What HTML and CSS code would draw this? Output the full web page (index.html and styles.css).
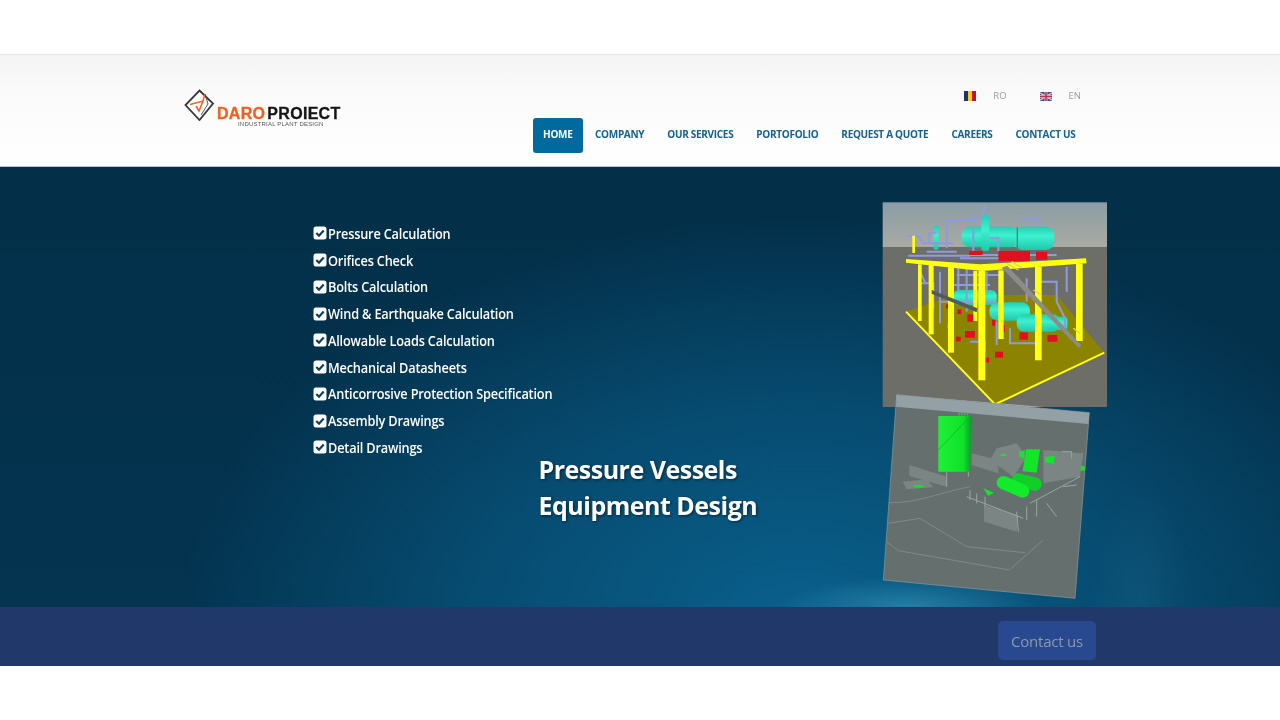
FILE: index.html
```html
<!DOCTYPE html>
<html lang="en">
<head>
<meta charset="utf-8">
<title>Daro Proiect</title>
<link rel="stylesheet" href="styles.css">
</head>
<body>
<div class="page">
  <header class="header">
    <div class="logo">
      <svg class="logo-mark" viewBox="0 0 32 32" aria-hidden="true">
        <path d="M15.5 1.500 29 14.500 15.500 31 1.500 16Z" fill="#fff" stroke="#33363a" stroke-width="1.800"/>
        <path d="M6 15.500 19 12 15 22 12 17M19 12 21 5" fill="none" stroke="#f0601e" stroke-width="1.500"/>
        <path d="M21 5 24 15 17 26" fill="none" stroke="#555" stroke-width="1"/>
      </svg>
      <div class="logo-text">
        <div class="logo-name"><span class="logo-orange">DARO</span><span class="logo-black">PROIECT</span></div>
        <div class="logo-sub">INDUSTRIAL PLANT DESIGN</div>
      </div>
    </div>
    <div class="header-right">
      <div class="langs">
        <span class="lang">
          <svg class="flag" viewBox="0 0 12 10" aria-hidden="true"><rect width="4" height="10" fill="#1c2f78"/><rect x="4" width="4" height="10" fill="#f5cf14"/><rect x="8" width="4" height="10" fill="#c8102e"/></svg>
          RO
        </span>
        <span class="lang">
          <svg class="flag" viewBox="0 0 12 10" aria-hidden="true"><rect width="12" height="10" y="1" fill="#3d4a86"/><path d="M0 2 12 9M12 2 0 9" stroke="#d8c8d0" stroke-width="1.500"/><path d="M6 1V10M0 5.500H12" stroke="#d8c8d0" stroke-width="3"/><path d="M6 1V10M0 5.500H12" stroke="#b8304a" stroke-width="1.500"/></svg>
          EN
        </span>
      </div>
      <nav class="nav">
        <a class="nav-item active">HOME</a>
        <a class="nav-item">COMPANY</a>
        <a class="nav-item">OUR SERVICES</a>
        <a class="nav-item">PORTOFOLIO</a>
        <a class="nav-item">REQUEST A QUOTE</a>
        <a class="nav-item">CAREERS</a>
        <a class="nav-item">CONTACT US</a>
      </nav>
    </div>
  </header>

  <section class="hero">
    <ul class="checks">
      <li class="check"><svg class="tick" viewBox="0 0 14 14"><rect width="13" height="13" x=".5" y=".5" rx="2.500" fill="#fff"/><path d="M3.300 7 6 9.700 10.700 4.500" fill="none" stroke="#0d3f5c" stroke-width="2.200"/></svg><span class="label">Pressure Calculation</span></li>
      <li class="check"><svg class="tick" viewBox="0 0 14 14"><rect width="13" height="13" x=".5" y=".5" rx="2.500" fill="#fff"/><path d="M3.300 7 6 9.700 10.700 4.500" fill="none" stroke="#0d3f5c" stroke-width="2.200"/></svg><span class="label">Orifices Check</span></li>
      <li class="check"><svg class="tick" viewBox="0 0 14 14"><rect width="13" height="13" x=".5" y=".5" rx="2.500" fill="#fff"/><path d="M3.300 7 6 9.700 10.700 4.500" fill="none" stroke="#0d3f5c" stroke-width="2.200"/></svg><span class="label">Bolts Calculation</span></li>
      <li class="check"><svg class="tick" viewBox="0 0 14 14"><rect width="13" height="13" x=".5" y=".5" rx="2.500" fill="#fff"/><path d="M3.300 7 6 9.700 10.700 4.500" fill="none" stroke="#0d3f5c" stroke-width="2.200"/></svg><span class="label">Wind &amp; Earthquake Calculation</span></li>
      <li class="check"><svg class="tick" viewBox="0 0 14 14"><rect width="13" height="13" x=".5" y=".5" rx="2.500" fill="#fff"/><path d="M3.300 7 6 9.700 10.700 4.500" fill="none" stroke="#0d3f5c" stroke-width="2.200"/></svg><span class="label">Allowable Loads Calculation</span></li>
      <li class="check"><svg class="tick" viewBox="0 0 14 14"><rect width="13" height="13" x=".5" y=".5" rx="2.500" fill="#fff"/><path d="M3.300 7 6 9.700 10.700 4.500" fill="none" stroke="#0d3f5c" stroke-width="2.200"/></svg><span class="label">Mechanical Datasheets</span></li>
      <li class="check"><svg class="tick" viewBox="0 0 14 14"><rect width="13" height="13" x=".5" y=".5" rx="2.500" fill="#fff"/><path d="M3.300 7 6 9.700 10.700 4.500" fill="none" stroke="#0d3f5c" stroke-width="2.200"/></svg><span class="label">Anticorrosive Protection Specification</span></li>
      <li class="check"><svg class="tick" viewBox="0 0 14 14"><rect width="13" height="13" x=".5" y=".5" rx="2.500" fill="#fff"/><path d="M3.300 7 6 9.700 10.700 4.500" fill="none" stroke="#0d3f5c" stroke-width="2.200"/></svg><span class="label">Assembly Drawings</span></li>
      <li class="check"><svg class="tick" viewBox="0 0 14 14"><rect width="13" height="13" x=".5" y=".5" rx="2.500" fill="#fff"/><path d="M3.300 7 6 9.700 10.700 4.500" fill="none" stroke="#0d3f5c" stroke-width="2.200"/></svg><span class="label">Detail Drawings</span></li>
    </ul>
    <h1 class="title">Pressure Vessels<br>Equipment Design</h1>

    <svg class="render render-plant" viewBox="0 0 750 645" aria-hidden="true">
      <defs>
        <linearGradient id="sky" x1="0" y1="0" x2="0" y2="1"><stop offset="0" stop-color="#8b9da6"/><stop offset="1" stop-color="#a9aaa3"/></linearGradient>
        <linearGradient id="vessel" x1="0" y1="0" x2="0" y2="1"><stop offset="0" stop-color="#1fd0b4"/><stop offset=".4" stop-color="#3ff0d0"/><stop offset="1" stop-color="#20c8a8"/></linearGradient>
      </defs>
      <rect x="38" y="22" width="673" height="134" fill="url(#sky)"/>
      <rect x="38" y="156" width="673" height="480" fill="#6e6e68"/>
      <path d="M108 350 250 300 560 300 703 473 375 628Z" fill="#8c8400"/>
      <path d="M108 350 375 628 703 473" fill="none" stroke="#ffff14" stroke-width="6"/>
      <g fill="url(#vessel)">
        <rect x="275" y="95" width="170" height="62" rx="24"/>
        <rect x="433" y="95" width="120" height="70" rx="26"/>
        <rect x="334" y="60" width="24" height="108" rx="8"/>
        <rect x="190" y="92" width="16" height="72" rx="6"/>
        <rect x="250" y="285" width="130" height="45" rx="16"/>
        <rect x="358" y="322" width="122" height="55" rx="24"/>
        <rect x="440" y="358" width="130" height="52" rx="22"/>
        <rect x="530" y="365" width="62" height="40" rx="8"/>
      </g>
      <path d="M442 97V163" stroke="#1a9a88" stroke-width="4"/>
      <g fill="none" stroke="#8f9be0" stroke-width="6">
        <path d="M110 122H145L160 145H250M178 148V115L200 112M230 160V78H320M340 70H300M450 72H505V95M115 182H300M345 30 338 62"/>
        <path d="M148 210V265H190V340M210 230V385M260 240H395M250 270H360M290 210V350M210 320H380M380 380V450M420 400V445H510M510 260H560V320L585 370V415M590 215V290"/>
        <path d="M300 180H560M310 100V180M360 130H385V170M170 170H260M270 190H420M235 385V400M300 440H345V470M150 230 165 262M265 215V285M350 230V290M470 250V320"/>
      </g>
      <g fill="#e01020">
        <rect x="298" y="168" width="40" height="12"/>
        <rect x="385" y="168" width="95" height="30"/>
        <rect x="498" y="170" width="34" height="24"/>
        <rect x="228" y="328" width="10" height="12"/>
        <rect x="262" y="343" width="12" height="14"/>
        <rect x="292" y="358" width="18" height="22"/>
        <rect x="366" y="374" width="10" height="18"/>
        <rect x="395" y="390" width="10" height="20"/>
        <rect x="448" y="412" width="26" height="22"/>
        <rect x="532" y="420" width="30" height="20"/>
        <rect x="258" y="425" width="14" height="14"/>
        <rect x="285" y="408" width="30" height="20"/>
        <rect x="375" y="470" width="24" height="18"/>
        <rect x="347" y="488" width="10" height="14"/>
      </g>
      <g fill="#ffff14">
        <path d="M108 192 330 208 648 190 650 205 335 228 108 203Z"/>
        <rect x="144" y="208" width="11" height="170"/>
        <rect x="176" y="208" width="15" height="210"/>
        <rect x="234" y="215" width="18" height="258"/>
        <rect x="325" y="228" width="21" height="328"/>
        <rect x="385" y="226" width="16" height="206"/>
        <rect x="310" y="228" width="12" height="150"/>
        <rect x="495" y="216" width="20" height="280"/>
        <rect x="618" y="206" width="20" height="232"/>
        <rect x="127" y="122" width="8" height="52"/>
      </g>
      <path d="M395 218 412 212 635 452 625 458Z" fill="#8c8c88"/>
      <path d="M410 205 445 225M425 200 455 218M490 285 515 300M610 400 630 415" stroke="#d8d860" stroke-width="4"/>
      <path d="M185 285 322 340 320 352 185 296Z" fill="#55595c"/>
      <path d="M78 600 520 636H78Z" fill="#a7aead"/>
    </svg>

    <svg class="render render-site" viewBox="0 0 690 645" aria-hidden="true">
      <defs>
        <linearGradient id="tower" x1="0" y1="0" x2="1" y2="0"><stop offset="0" stop-color="#1ef038"/><stop offset=".75" stop-color="#10e028"/><stop offset="1" stop-color="#0c9a2a"/></linearGradient>
      </defs>
      <path d="M80 14 658 68 615 625 40 570Z" fill="#656f6e" stroke="#8f9c9d" stroke-width="2"/>
      <path d="M80 14 658 68 655 102 78 50Z" fill="#93a1a6"/>
      <g fill="none" stroke="#7f8a88" stroke-width="3">
        <path d="M58 338C140 340 200 310 300 290M55 400 150 385 290 470 465 488M50 455 85 482 418 540 520 450"/>
      </g>
      <g fill="#7a8584">
        <path d="M118 225 230 260 230 290 118 258Z"/>
        <path d="M98 275 170 268 190 292 110 298Z"/>
        <path d="M342 345 445 375 440 425 342 395Z"/>
        <path d="M305 190 385 210 385 250 305 225Z"/>
        <path d="M380 175 440 160 470 200 430 260 360 210Z"/>
        <path d="M520 180 640 190 630 260 520 280Z"/>
      </g>
      <g fill="none" stroke="#9aa5a3" stroke-width="3">
        <path d="M230 290V235H295V260M290 320 460 385M480 340 630 260M530 340 560 380M575 185H605V205M440 365 445 425M580 290 620 285"/>
        <path d="M300 300V330M320 310V340M345 320V350M470 350V390M500 330V380"/>
      </g>
      <path d="M205 78H305L300 245 205 245Z" fill="url(#tower)"/>
      <path d="M205 180 290 90" stroke="#0ca828" stroke-width="2"/>
      <path d="M265 72H297" stroke="#4aa858" stroke-width="9" stroke-dasharray="5 3"/>
      <g fill="#12e628">
        <path d="M468 178H510L500 248 458 244Z"/>
        <path d="M340 295 372 308 355 318Z"/>
        <path d="M132 286H160V292H132Z"/>
        <path d="M525 200 555 198 550 222 525 215Z"/>
        <path d="M448 185 465 180 462 205 448 200Z"/>
        <rect x="632" y="228" width="12" height="14"/>
        <rect x="392" y="192" width="16" height="6"/>
      </g>
      <g stroke-linecap="round" fill="none" stroke-width="40">
        <path d="M445 270 495 282" stroke="#10d028"/>
        <path d="M400 278 458 303" stroke="#12ea2c"/>
      </g>
    </svg>
  </section>

  <section class="band">
    <a class="contact">Contact us</a>
  </section>
</div>
</body>
</html>
```

FILE: styles.css
```css
* { box-sizing: border-box; }
html, body { margin: 0; padding: 0; background: #fff; }
body { font-family: "Open Sans", "Liberation Sans", sans-serif; }
.page { padding-top: 54px; height: 720px; overflow: hidden; }

.header {
  height: 113px;
  display: flex;
  justify-content: space-between;
  padding: 34px 193px 0 184px;
  background: linear-gradient(#f4f4f4 0, #fafafa 30%, #ffffff 100%);
  border-top: 1px solid #e6e6e6;
  border-bottom: 1px solid #b9c4ca;
}
.logo { display: flex; align-items: flex-start; filter: blur(.4px); }
.logo-mark { width: 32px; height: 32px; flex: none; }
.logo-text { margin: 17px 0 0 1px; display: flex; flex-direction: column; }
.logo-name { font: 700 16px/16px "Liberation Sans", sans-serif; letter-spacing: .3px; -webkit-text-stroke: .3px; }
.logo-orange { color: #f0601e; }
.logo-black { color: #151515; margin-left: 2px; }
.logo-sub { font: 400 6px/7px "Liberation Sans", sans-serif; color: #555; margin: -1px 0 0 21px; letter-spacing: .2px; white-space: nowrap; }

.header-right { display: flex; flex-direction: column; align-items: flex-end; }
.langs { display: flex; gap: 33px; margin: 2px 6px 0 0; }
.lang { display: flex; align-items: center; gap: 17px; font-size: 9.5px; line-height: 10px; color: #9b9b9b; filter: blur(.3px); }
.flag { width: 12px; height: 10px; display: block; }
.nav { display: flex; margin-top: 17px; align-items: stretch; }
.nav-item {
  display: flex;
  align-items: center;
  height: 35px;
  padding: 0 11.500px 3px;
  font-size: 10px;
  font-weight: 700;
  color: #14628f;
  letter-spacing: -.3px;
  white-space: nowrap;
  filter: blur(.3px);
}
.nav-item.active { background: #006a9f; color: #fff; border-radius: 3px; padding: 0 10px 3px; margin-right: 1px; }

.hero {
  position: relative;
  height: 440px;
  padding: 53px 0 0 313px;
  background:
    radial-gradient(130px 30px at 910px 440px, rgba(70,170,205,.45), rgba(70,170,205,0)),
    radial-gradient(50px 110px at 1140px 430px, rgba(60,140,170,.12), rgba(60,140,170,0)),
    radial-gradient(620px 400px at 800px 450px, #09608c 0, rgba(9,90,133,.6) 55%, rgba(9,90,133,0) 100%),
    linear-gradient(#032f48, #033450);
}
.checks { list-style: none; margin: 0; padding: 0; }
.check {
  display: flex;
  align-items: center;
  gap: 1px;
  height: 26.750px;
  font-size: 14px;
  font-weight: 600;
  letter-spacing: -.2px;
  color: #fff;
  white-space: nowrap;
  filter: blur(.3px);
}
.label { display: inline-block; transform: scaleX(.91); transform-origin: 0 50%; }
.tick { width: 14px; height: 14px; flex: none; }
.title {
  position: absolute;
  left: 538.500px;
  top: 284px;
  margin: 0;
  font-size: 25px;
  line-height: 36px;
  font-weight: 700;
  letter-spacing: -.5px;
  color: #fff;
  text-shadow: 1px 1px 3px rgba(0,0,0,.55);
  white-space: nowrap;
  filter: blur(.3px);
}
.render { position: absolute; left: 870px; filter: blur(.6px); }
.render-plant { top: 28px; width: 250px; height: 215px; }
.render-site { top: 223px; width: 230px; height: 215px; }

.band {
  height: 59px;
  background: #21386b;
  display: flex;
  justify-content: flex-end;
  align-items: flex-start;
  padding: 14px 184px 0 0;
}
.contact {
  width: 98px;
  height: 39px;
  display: flex;
  align-items: center;
  justify-content: center;
  background: #28488f;
  border-radius: 5px;
  color: #8f99a8;
  font-size: 15px;
  letter-spacing: -.2px;
  filter: blur(.3px);
}
```
